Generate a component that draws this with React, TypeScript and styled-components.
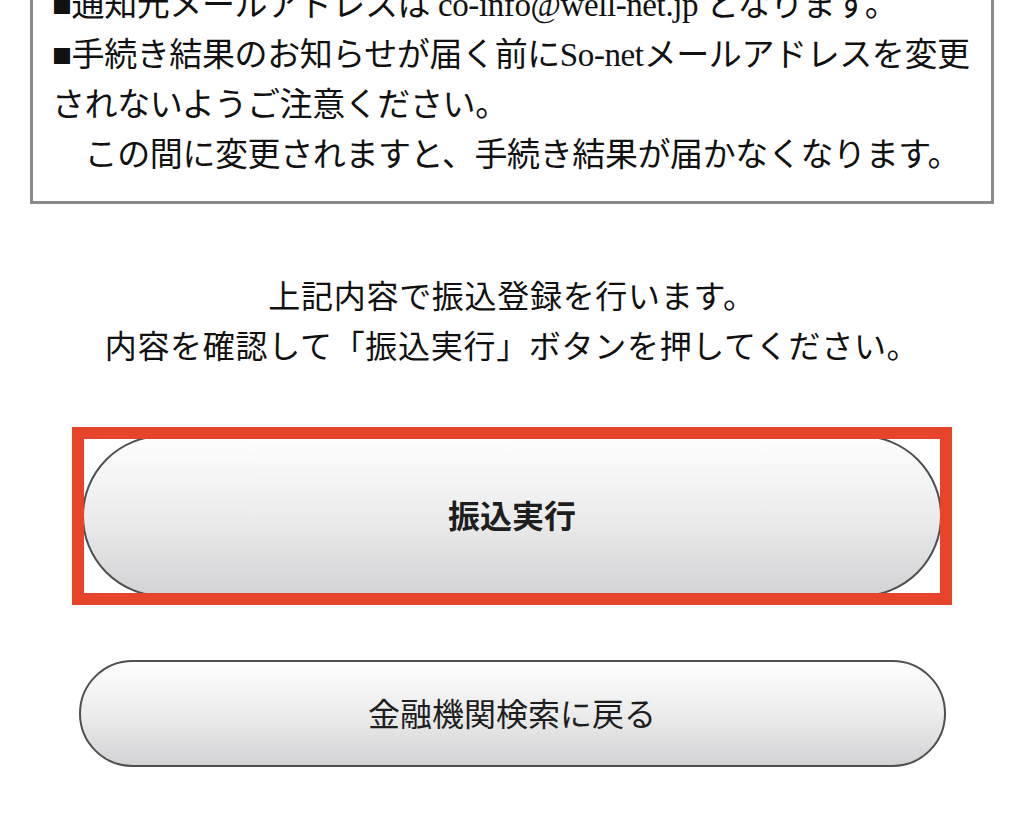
import styled, { createGlobalStyle } from 'styled-components';

const GlobalStyle = createGlobalStyle`
  html, body {
    margin: 0;
    padding: 0;
    background: #ffffff;
  }
  body {
    overflow: hidden;
    font-family: "Liberation Serif", "Noto Sans CJK JP", serif;
    color: #111;
  }
`;

// the page is scrolled: the first line of the notice sits partly above the top edge
const noticeLines = [
  '■通知元メールアドレスは co-info@well-net.jp となります。',
  '■手続き結果のお知らせが届く前にSo-netメールアドレスを変更',
  'されないようご注意ください。',
  '\u3000この間に変更されますと、手続き結果が届かなくなります。',
];

export default function App() {
  return <Page>
    <GlobalStyle />
    <NoticeBox>
      {noticeLines.map((line, i) => <NoticeLine key={i}>{line}</NoticeLine>)}
    </NoticeBox>

    <Message>
      上記内容で振込登録を行います。<br />
      内容を確認して「振込実行」ボタンを押してください。
    </Message>

    <Highlight>
      <PillButton $primary>振込実行</PillButton>
    </Highlight>

    <BackButton>金融機関検索に戻る</BackButton>
  </Page>;
}

const Page = styled.div`
  width: 1024px;
  height: 837px;
  display: flex;
  flex-direction: column;
  align-items: center;
`;

const NoticeBox = styled.div`
  box-sizing: border-box;
  width: 964px;
  margin-top: -40px;
  padding: 17px 19px 21px;
  border: 3px solid #8a8a8a;
`;

const NoticeLine = styled.div`
  font-size: 33px;
  line-height: 50px;
  white-space: nowrap;
  letter-spacing: -0.4px;
`;

const Message = styled.p`
  margin: 68px 0 0;
  font-size: 32px;
  line-height: 50px;
  letter-spacing: 0.7px;
  text-align: center;
  color: #111;
`;

const Highlight = styled.div`
  box-sizing: border-box;
  width: 880px;
  height: 178px;
  margin-top: 55px;
  border: 12px solid #e8432b;
  overflow: hidden;
  display: flex;
  justify-content: center;
  align-items: center;
`;

const PillButton = styled.button<{ $primary?: boolean }>`
  flex: none;
  box-sizing: border-box;
  width: ${p => (p.$primary ? '860px' : '867px')};
  height: ${p => (p.$primary ? '162px' : '107px')};
  border: 2px solid #4f4f4f;
  border-radius: 90px;
  background: linear-gradient(to bottom, #fefefe 0%, #ececec 50%, #d3d3d6 100%);
  font-family: "Noto Sans CJK JP", "Liberation Sans", sans-serif;
  font-size: 32px;
  font-weight: ${p => (p.$primary ? 700 : 400)};
  color: #1e1e1e;
  padding: 0 0 4px;
  cursor: pointer;
`;

const BackButton = styled(PillButton)`
  margin-top: 55px;
`;
